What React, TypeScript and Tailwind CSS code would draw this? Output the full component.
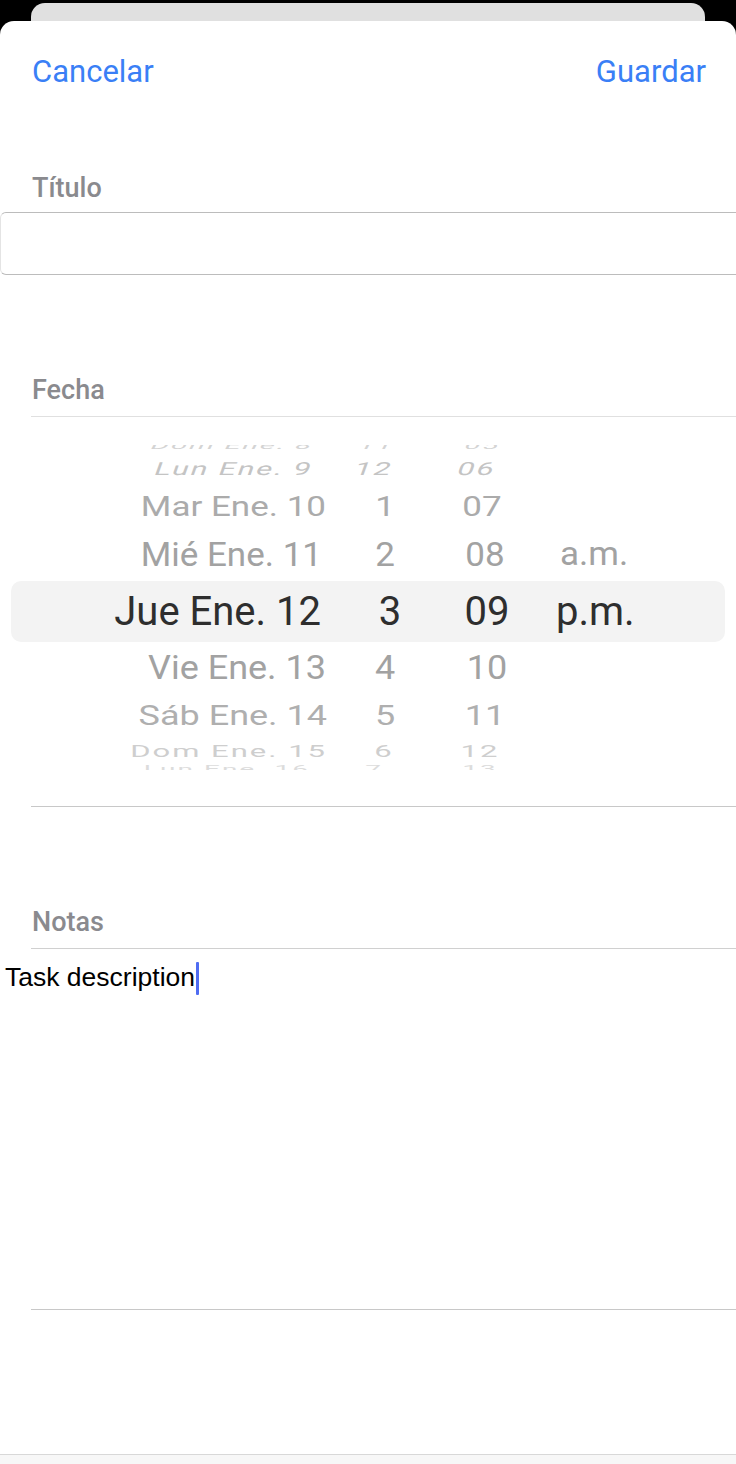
import React from 'react';

type Cell = { date: string; hour: string; min: string; ampm?: string };

type RowStyle = {
    h: string;
    size: string;
    color: string;
    scale: string;
    cols: string;
    align?: string;
    extra?: string;
};

const rows: { cell: Cell; style: RowStyle }[] = [
    {
        cell: { date: 'Dom Ene. 8', hour: '11', min: '05' },
        style: { h: 'h-[10px]', size: 'text-[28px]', color: 'text-[#d4d4d4]', scale: 'scale-y-[0.4] origin-bottom -translate-y-[4px]', cols: 'grid-cols-[310px_128px_84px_1fr]', align: 'items-end', extra: 'tracking-[2px] -skew-x-12' },
    },
    {
        cell: { date: 'Lun Ene. 9', hour: '12', min: '06' },
        style: { h: 'h-[28px]', size: 'text-[30px]', color: 'text-[#c4c4c4]', scale: 'scale-y-[0.6]', cols: 'grid-cols-[313px_122px_84px_1fr]', extra: 'tracking-[2px] -skew-x-12' },
    },
    {
        cell: { date: 'Mar Ene. 10', hour: '1', min: '07' },
        style: { h: 'h-[46px]', size: 'text-[35px]', color: 'text-[#ababab]', scale: 'scale-y-[0.8]', cols: 'grid-cols-[326px_118px_76px_1fr]' },
    },
    {
        cell: { date: 'Mié Ene. 11', hour: '2', min: '08', ampm: 'a.m.' },
        style: { h: 'h-[52px]', size: 'text-[35px]', color: 'text-[#a2a2a2]', scale: 'scale-y-[0.94]', cols: 'grid-cols-[322px_126px_74px_1fr]' },
    },
    {
        cell: { date: 'Jue Ene. 12', hour: '3', min: '09', ampm: 'p.m.' },
        style: { h: 'h-[61px]', size: 'text-[40px]', color: 'text-[#2e2e2e]', scale: 'scale-y-100', cols: 'grid-cols-[310px_138px_56px_1fr]' },
    },
    {
        cell: { date: 'Vie Ene. 13', hour: '4', min: '10' },
        style: { h: 'h-[52px]', size: 'text-[36px]', color: 'text-[#a2a2a2]', scale: 'scale-y-[0.92]', cols: 'grid-cols-[326px_118px_86px_1fr]' },
    },
    {
        cell: { date: 'Sáb Ene. 14', hour: '5', min: '11' },
        style: { h: 'h-[44px]', size: 'text-[36px]', color: 'text-[#afafaf]', scale: 'scale-y-[0.76]', cols: 'grid-cols-[327px_116px_84px_1fr]' },
    },
    {
        cell: { date: 'Dom Ene. 15', hour: '6', min: '12' },
        style: { h: 'h-[26px]', size: 'text-[31px]', color: 'text-[#cecece]', scale: 'scale-y-[0.56]', cols: 'grid-cols-[327px_114px_78px_1fr]', extra: 'tracking-[2px]' },
    },
    {
        cell: { date: 'Lun Ene. 16', hour: '7', min: '13' },
        style: { h: 'h-[6px]', size: 'text-[28px]', color: 'text-[#dcdcdc]', scale: 'scale-y-[0.4] origin-top', cols: 'grid-cols-[310px_128px_84px_1fr]', align: 'items-start', extra: 'tracking-[2px]' },
    },
];

function PickerRow({ cell, style, selected }: { cell: Cell; style: RowStyle; selected: boolean }) {
    const txt = `${style.scale} ${style.extra ?? ''} leading-none whitespace-nowrap`;
    return (
        <div
            className={`${style.h} ${style.size} ${style.color} overflow-hidden flex ${style.align ?? 'items-center'} ${
                selected ? 'mx-[11px] rounded-[10px] bg-[#f3f3f3]' : ''
            }`}
        >
            <div className={`grid w-full ${style.align ?? 'items-center'} ${style.cols}`}>
                <div className="flex justify-end">
                    <span className={txt}>{cell.date}</span>
                </div>
                <div className="flex justify-center">
                    <span className={txt}>{cell.hour}</span>
                </div>
                <div className="flex justify-center">
                    <span className={txt}>{cell.min}</span>
                </div>
                <div className={selected ? 'pl-[41px]' : 'pl-[38px]'}>
                    {cell.ampm && <span className={`${txt} inline-block`}>{cell.ampm}</span>}
                </div>
            </div>
        </div>
    );
}

function Label({ children }: { children: React.ReactNode }) {
    return (
        <div className="h-[28px] pl-[32px] flex items-center text-[27px] font-medium text-[#8a8a8e] [font-family:Roboto,sans-serif]">
            {children}
        </div>
    );
}

export default function App() {
    return (
        <div className="h-[1464px] bg-black flex flex-col overflow-hidden [font-family:Roboto,sans-serif]">
            <div className="pt-[3px]">
                <div className="mx-[31px] h-[30px] rounded-t-[14px] bg-[#e0e0e0]" />
            </div>
            <div className="-mt-[12px] flex-1 bg-white rounded-t-[14px] flex flex-col">
                {/* header */}
                <div className="mt-[29px] h-[44px] pl-[32px] pr-[30px] flex items-center justify-between text-[31px] text-[#3a7ff6]">
                    <button>Cancelar</button>
                    <button>Guardar</button>
                </div>

                {/* titulo */}
                <div className="mt-[80px]">
                    <Label>Título</Label>
                </div>
                <div className="mt-[10px] h-[63px] border-y border-l border-[#bcbcbc] border-l-[#e4e4e4] rounded-l-[6px]" />

                {/* fecha */}
                <div className="mt-[101px]">
                    <Label>Fecha</Label>
                </div>
                <div className="mt-[12px] ml-[31px] border-t border-[#e0e0e0]" />
                <div className="pt-[28px] pb-[36px]">
                    {rows.map((r, i) => (
                        <PickerRow key={i} cell={r.cell} style={r.style} selected={i === 4} />
                    ))}
                </div>
                <div className="ml-[31px] border-t border-[#c8c8c8]" />

                {/* notas */}
                <div className="mt-[101px]">
                    <Label>Notas</Label>
                </div>
                <div className="mt-[12px] ml-[31px] border-t border-[#d0d0d0]" />
                <div className="h-[360px] pt-[12px] pl-[5px]">
                    <div className="flex items-center h-[34px] text-[26.5px] text-black [font-family:'Liberation_Sans',Arial,sans-serif]">
                        <span>Task description</span>
                        <span className="ml-[1px] w-[3px] h-[33px] bg-[#4f6cf2] rounded-[1px]" />
                    </div>
                </div>
                <div className="ml-[31px] border-t border-[#c8c8c8]" />
                <div className="flex-1" />
                <div className="h-[10px] border-t border-[#d8d8d8] bg-[#f7f7f7]" />
            </div>
        </div>
    );
}
